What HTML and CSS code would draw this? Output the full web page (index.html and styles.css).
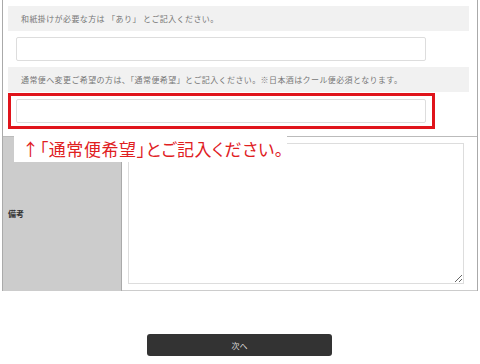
FILE: index.html
```html
<!DOCTYPE html>
<html lang="ja">
<head>
    <meta charset="UTF-8">
    <meta name="viewport" content="width=device-width, initial-scale=1.0">
    <title>ご注文フォーム</title>
    <link rel="stylesheet" href="styles.css">
</head>
<body>
    <div class="frame">
        <div class="field">
            <p class="note">和紙掛けが必要な方は 「あり」 とご記入ください。</p>
            <div class="input-wrap">
                <input type="text" class="input-1">
            </div>
        </div>

        <div class="field">
            <p class="note">通常便へ変更ご希望の方は、「通常便希望」とご記入ください。※日本酒はクール便必須となります。</p>
            <div class="input-wrap hl">
                <input type="text" class="input-1">
            </div>
        </div>

        <div class="table-box">
            <p class="hint">↑「通常便希望」とご記入ください。</p>
            <table class="form-table">
                <tr>
                    <th>備考</th>
                    <td><textarea class="memo"></textarea></td>
                </tr>
            </table>
        </div>
    </div>

    <div class="btn-row">
        <button class="btn-next">次へ</button>
    </div>
</body>
</html>
```

FILE: styles.css
```css
*{
    margin: 0;
    padding: 0;
    box-sizing: border-box;
}

body{
    background: #fff;
    font-family: "Noto Sans CJK JP", "Noto Sans", sans-serif;
    color: #777;
}

.frame{
    margin-left: 2px;
    width: 476px;
    border-left: 1px solid #aaa;
    border-right: 1px solid #aaa;
    padding-top: 6px;
}

.note{
    margin-left: 5px;
    width: 461px;
    height: 25px;
    background-color: #f1f1f1;
    font-size: 8px;
    letter-spacing: 0.4px;
    line-height: 25px;
    padding-left: 13px;
    white-space: pre;
}

.input-wrap{
    margin-left: 5px;
    padding: 6px 0 6px 8px;
}

.input-1{
    display: block;
    width: 410px;
    height: 24px;
    border: 1px solid #ddd;
    border-radius: 2px;
    outline: none;
    background: #fff;
}

.hl{
    width: 427px;
    margin-top: 1px;
    border: 3px solid #e0141b;
    padding: 3px 6px 3px 5px;
}

.table-box{
    position: relative;
    margin-top: 7px;
}

.hint{
    position: absolute;
    left: 11px;
    top: -1px;
    background: #fff;
    color: #e0201f;
    font-size: 17px;
    letter-spacing: 0.6px;
    line-height: 27px;
    padding: 0 3px 0 8px;
    font-feature-settings: "palt";
    white-space: nowrap;
}

.form-table{
    width: 100%;
    border-collapse: collapse;
    border-top: 1px solid #bbb;
    border-bottom: 1px solid #ccc;
}

.form-table th{
    width: 118px;
    height: 154px;
    background-color: #ccc;
    border-right: 1px solid #aaa;
    color: #333;
    font-size: 8px;
    font-weight: bold;
    text-align: left;
    vertical-align: middle;
    padding-left: 5px;
}

.form-table td{
    padding: 6px 0 6px 6px;
    vertical-align: top;
}

.memo{
    display: block;
    width: 336px;
    height: 141px;
    border: 1px solid #ddd;
    outline: none;
}

.btn-row{
    display: flex;
    justify-content: center;
    padding-top: 43px;
    padding-right: 1px;
}

.btn-next{
    width: 185px;
    height: 22px;
    background-color: #333;
    color: #ddd;
    border: none;
    border-radius: 3px;
    font-family: "Noto Sans CJK JP", sans-serif;
    font-size: 8px;
}
```
